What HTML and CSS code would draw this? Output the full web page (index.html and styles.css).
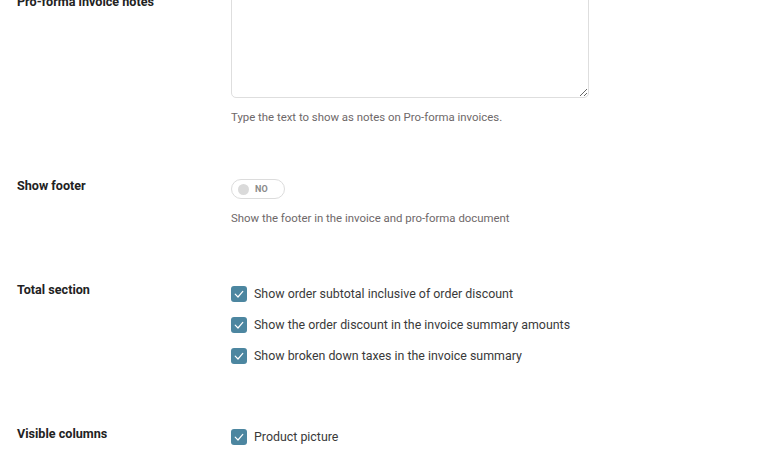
FILE: index.html
```html
<!DOCTYPE html>
<html>
<head>
<meta charset="utf-8">
<link rel="stylesheet" href="styles.css">
</head>
<body>
<div class="page">
  <div class="row row-notes">
    <div class="label label-notes">Pro-forma invoice notes</div>
    <div class="control">
      <textarea class="textarea"></textarea>
      <div class="help">Type the text to show as notes on Pro-forma invoices.</div>
    </div>
  </div>

  <div class="row row-footer">
    <div class="label">Show footer</div>
    <div class="control">
      <div class="toggle"><span class="knob"></span><span class="toggle-text">NO</span></div>
      <div class="help">Show the footer in the invoice and pro-forma document</div>
    </div>
  </div>

  <div class="row row-total">
    <div class="label">Total section</div>
    <div class="control checklist">
      <label class="check"><span class="box"><svg viewBox="0 0 16 16" width="16" height="16"><path d="M4.2 8.2 L7 11 L11.8 5.4" fill="none" stroke="#fff" stroke-width="1.2" stroke-linecap="round" stroke-linejoin="round"/></svg></span>Show order subtotal inclusive of order discount</label>
      <label class="check"><span class="box"><svg viewBox="0 0 16 16" width="16" height="16"><path d="M4.2 8.2 L7 11 L11.8 5.4" fill="none" stroke="#fff" stroke-width="1.2" stroke-linecap="round" stroke-linejoin="round"/></svg></span>Show the order discount in the invoice summary amounts</label>
      <label class="check"><span class="box"><svg viewBox="0 0 16 16" width="16" height="16"><path d="M4.2 8.2 L7 11 L11.8 5.4" fill="none" stroke="#fff" stroke-width="1.2" stroke-linecap="round" stroke-linejoin="round"/></svg></span>Show broken down taxes in the invoice summary</label>
    </div>
  </div>

  <div class="row row-columns">
    <div class="label">Visible columns</div>
    <div class="control checklist">
      <label class="check"><span class="box"><svg viewBox="0 0 16 16" width="16" height="16"><path d="M4.2 8.2 L7 11 L11.8 5.4" fill="none" stroke="#fff" stroke-width="1.2" stroke-linecap="round" stroke-linejoin="round"/></svg></span>Product picture</label>
    </div>
  </div>
</div>
</body>
</html>
```

FILE: styles.css
```css
html, body {
  margin: 0;
  padding: 0;
  background: #fff;
  overflow: hidden;
}
body {
  font-family: Roboto, "Liberation Sans", sans-serif;
  color: #333;
}
.page {
  margin-top: -8px;
  padding-left: 17px;
}
.row {
  display: flex;
  align-items: flex-start;
}
.label {
  width: 214px;
  flex: none;
  font-size: 12.6px;
  font-weight: 700;
  line-height: 14px;
  color: #222;
}
.label-notes { margin-top: 3px; }
.control {
  display: flex;
  flex-direction: column;
  align-items: flex-start;
}
.textarea {
  display: block;
  box-sizing: border-box;
  width: 358px;
  height: 106px;
  margin: 0;
  border: 1px solid #dedede;
  border-radius: 5px;
  background: #fff;
  resize: vertical;
  font-family: inherit;
  outline: none;
}
.help {
  margin-top: 11px;
  font-size: 11.4px;
  line-height: 16px;
  color: #6e6869;
}
.row-footer { margin-top: 54px; }
.row-total { margin-top: 60px; }
.row-columns { margin-top: 65px; }
.row-total .label { margin-top: -3px; }
.row-columns .label { margin-top: -2px; }

.toggle {
  box-sizing: border-box;
  width: 54px;
  height: 20px;
  border: 1px solid #dcdcdc;
  border-radius: 10px;
  display: flex;
  align-items: center;
  padding-left: 6px;
  gap: 6px;
}
.knob {
  width: 11px;
  height: 11px;
  border-radius: 50%;
  background: #dadada;
}
.toggle-text {
  font-size: 9px;
  font-weight: 700;
  color: #8a8a8a;
  letter-spacing: 0.2px;
}

.checklist {
  gap: 15px;
}
.check {
  display: flex;
  align-items: center;
  gap: 7px;
  font-size: 12.4px;
  line-height: 16px;
  color: #3a3a3a;
}
.box {
  width: 16px;
  height: 16px;
  border-radius: 3px;
  background: #4c86a0;
  display: block;
  flex: none;
}
.box svg { display: block; }
```
